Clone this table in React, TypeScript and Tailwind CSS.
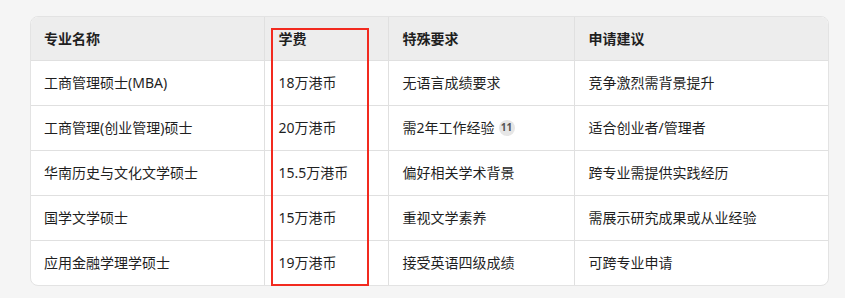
const rows = [
  { name: '工商管理硕士(MBA)', fee: '18万港币', req: '无语言成绩要求', tip: '竞争激烈需背景提升' },
  { name: '工商管理(创业管理)硕士', fee: '20万港币', req: '需2年工作经验', badge: '11', tip: '适合创业者/管理者' },
  { name: '华南历史与文化文学硕士', fee: '15.5万港币', req: '偏好相关学术背景', tip: '跨专业需提供实践经历' },
  { name: '国学文学硕士', fee: '15万港币', req: '重视文学素养', tip: '需展示研究成果或从业经验' },
  { name: '应用金融学理学硕士', fee: '19万港币', req: '接受英语四级成绩', tip: '可跨专业申请' },
]

export default function App() {
  return (
    <div
      className="min-h-[298px] w-[845px] bg-[#f5f5f5] pt-[16px] pl-[30px] text-[14px] text-[#1f1f1f]"
      style={{ fontFamily: '"Noto Sans", "Noto Sans CJK SC", sans-serif' }}
    >
      <div className="relative w-[799px]">
        <div className="overflow-hidden rounded-lg border border-[#e3e3e3] bg-white">
          <table className="w-full table-fixed border-collapse">
            <colgroup>
              <col className="w-[233px]" />
              <col className="w-[124px]" />
              <col className="w-[186px]" />
              <col />
            </colgroup>
            <thead>
              <tr className="h-[43px] bg-[#ededed]">
                <th className="px-[13px] text-left font-bold">专业名称</th>
                <th className="border-l border-[#e0e0e0] px-[14px] text-left font-bold">学费</th>
                <th className="border-l border-[#e0e0e0] px-[14px] text-left font-bold">特殊要求</th>
                <th className="border-l border-[#e0e0e0] px-[14px] text-left font-bold">申请建议</th>
              </tr>
            </thead>
            <tbody>
              {rows.map((r) => (
                <tr key={r.name} className="h-[45px] border-t border-[#e0e0e0]">
                  <td className="px-[13px]">{r.name}</td>
                  <td className="border-l border-[#e0e0e0] px-[14px]">{r.fee}</td>
                  <td className="border-l border-[#e0e0e0] px-[14px]">
                    <span className="inline-flex items-center">
                      {r.req}
                      {r.badge && (
                        <span className="ml-[4px] inline-flex h-[16px] w-[16px] items-center justify-center rounded-full bg-[#e6e6e6] text-[10px] font-bold text-[#555]">
                          {r.badge}
                        </span>
                      )}
                    </span>
                  </td>
                  <td className="border-l border-[#e0e0e0] px-[14px]">{r.tip}</td>
                </tr>
              ))}
            </tbody>
          </table>
        </div>
        {/* highlight over the fee column */}
        <div className="absolute left-[241px] top-[12px] h-[258px] w-[98px] border-2 border-[#f22a1f]" />
      </div>
    </div>
  )
}
